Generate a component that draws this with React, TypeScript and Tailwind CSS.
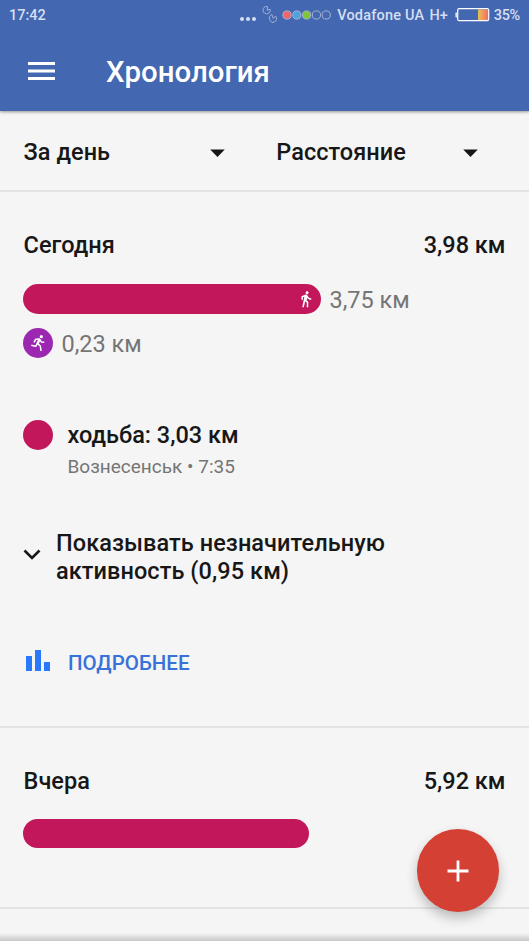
import React from 'react';
import { MdArrowDropDown, MdDirectionsWalk } from 'react-icons/md';

// =====================================================
// Хронология — дневная статистика активности
// =====================================================

const SIM_DOTS = ['fill-[#f0646c]', 'fill-[#4fa3dc]', 'fill-[#7cc63c]', 'fill-none', 'fill-none'];

function StatusBar() {
  return (
    <div className="flex h-[30px] items-center pl-[9px] pr-[9px] text-[14.5px] font-medium leading-none text-[#d5def2]">
      <span className="pt-[2px]">17:42</span>
      <svg className="ml-auto" width="16" height="30" viewBox="0 0 16 30" fill="currentColor">
        <circle cx="2" cy="19" r="2" />
        <circle cx="8" cy="19" r="2" />
        <circle cx="14" cy="19" r="2" />
      </svg>
      <svg className="ml-[6px]" width="16" height="30" viewBox="0 0 16 30" fill="none" stroke="#a3b1d6" strokeWidth="1">
        <path d="M5.400 6.500C2.700 5.900.8 8 1 10.300C1.300 13 3.600 14.300 5.800 13.600C7.700 13 8.700 11.200 8.300 9.400L5.300 10.200Z" />
        <path d="M9.800 14.400C7.600 15.200 6.700 17.700 7.700 19.900L9.900 22.500L12.800 21.800C14.600 20.600 15.100 18 13.800 16.200L11.200 18.300Z" />
      </svg>
      <svg className="ml-[4px]" width="50" height="30" viewBox="0 0 50 30">
        {SIM_DOTS.map((fill, i) => (
          <circle key={i} cx={5 + i * 9.8} cy="15" r="4.1" className={fill} stroke="#a9b3cf" strokeWidth="1" />
        ))}
      </svg>
      <span className="ml-[5px] pt-[2px] tracking-[0.2px]">Vodafone UA</span>
      <span className="ml-[5px] pt-[2px]">H+</span>
      <svg className="ml-[7px]" width="35" height="30" viewBox="0 0 35 30">
        <defs>
          <linearGradient id="charge">
            <stop offset="0" stopColor="#dcc45a" />
            <stop offset="0.35" stopColor="#f3a056" />
            <stop offset="1" stopColor="#f0686c" />
          </linearGradient>
        </defs>
        <path d="M1.800 12.500h-.5a.8.8 0 0 0-.8.8v3.400a.8.8 0 0 0 .8.8h.5Z" fill="white" />
        <rect x="23" y="9.500" width="10.500" height="11" fill="url(#charge)" />
        <rect x="2.700" y="8.700" width="31" height="12" rx="1.500" fill="none" stroke="white" strokeWidth="1.200" />
      </svg>
      <span className="ml-[4px] pt-[2px] tracking-[-0.3px]">35%</span>
    </div>
  );
}

function AppBar() {
  return (
    <div className="flex h-[82px] items-center pl-[28px]">
      <svg width="27" height="20" viewBox="0 0 27 20" fill="white">
        <rect y="1" width="27" height="3" />
        <rect y="8.500" width="27" height="3" />
        <rect y="16" width="27" height="3" />
      </svg>
      <h1 className="ml-[51px] pt-[3px] text-[29.400px] font-medium leading-none text-white">Хронология</h1>
    </div>
  );
}

function RunIcon() {
  return (
    <svg width="16" height="18" viewBox="0 0 48 54" fill="none" stroke="white" strokeWidth="4.500" strokeLinejoin="round">
      <circle cx="34" cy="8" r="4.800" fill="white" stroke="none" />
      <path d="M29 15L22 30" strokeWidth="7.500" />
      <path d="M30 15L17 16L12 25" />
      <path d="M30 17L34 24L43 25" />
      <path d="M23 29L31 36L33 51" />
      <path d="M22 29L17 37L4 34" />
    </svg>
  );
}

function Picker({ label }: { label: string }) {
  return (
    <button type="button" className="flex w-[253px] items-center justify-between pr-[41px] text-left">
      <span className="pt-[2px] tracking-[0.05px]">{label}</span>
      <MdArrowDropDown className="h-[35px] w-[35px]" />
    </button>
  );
}

function DayHeader({ title, total }: { title: string; total: string }) {
  return (
    <div className="flex justify-between pl-[0.5px] leading-[28px]">
      <h2 className="tracking-[0.05px]">{title}</h2>
      <span>{total}</span>
    </div>
  );
}

export default function App() {
  return (
    <div className="relative flex h-[941px] w-[529px] flex-col overflow-hidden bg-[#f5f5f5] font-['Roboto',sans-serif] text-[23.5px] font-medium text-[#171717]">
      <header className="relative h-[111px] shrink-0 bg-[#4367b0] shadow-[0_1px_3px_rgba(0,0,0,0.4)]">
        <StatusBar />
        <AppBar />
      </header>

      {/* Фильтры */}
      <div className="flex h-[81px] shrink-0 items-center border-b-2 border-[#e3e3e3] pl-[23.5px] pt-[3px] leading-none">
        <Picker label="За день" />
        <Picker label="Расстояние" />
      </div>

      {/* Сегодня */}
      <section className="h-[536px] shrink-0 border-b-2 border-[#e3e3e3] pl-[23px] pr-[23.5px] pt-[39px]">
        <DayHeader title="Сегодня" total="3,98 км" />
        <div className="mt-[25px] flex items-center">
          <div className="flex h-[30px] w-[298px] items-center justify-end rounded-full bg-[#c2185b] pr-[6px]">
            <MdDirectionsWalk className="h-[18px] w-[18px] text-white" />
          </div>
          <span className="ml-[8.500px] pt-[2px] font-normal leading-[28px] text-[#757575]">3,75 км</span>
        </div>
        <div className="mt-[14px] flex items-center">
          <div className="flex h-[30px] w-[30px] items-center justify-center rounded-full bg-[#9c27b0]">
            <RunIcon />
          </div>
          <span className="ml-[8.500px] pt-[2px] font-normal leading-[28px] text-[#757575]">0,23 км</span>
        </div>

        <div className="mt-[62px] flex">
          <div className="h-[30px] w-[30px] rounded-full bg-[#c2185b]" />
          <div className="ml-[14.500px]">
            <p className="leading-[30px]">ходьба: 3,03 км</p>
            <p className="mt-[3px] text-[19px] font-normal leading-[28px] text-[#757575]">Вознесенськ • 7:35</p>
          </div>
        </div>

        <button type="button" className="mt-[48px] flex items-center text-left">
          <svg className="mb-[4px]" width="18" height="12" viewBox="0 0 18 12" fill="none" stroke="currentColor" strokeWidth="2.600">
            <path d="M1.500 1.500L9 9L16.500 1.500" />
          </svg>
          <span className="ml-[15px] w-[360px] leading-[28px] tracking-[0.07px]">
            Показывать незначительную активность (0,95 км)
          </span>
        </button>

        <button type="button" className="mt-[62px] flex items-center pl-[3px] leading-[28px] text-[#3871d9]">
          <svg className="mb-[3px]" width="24" height="21" viewBox="0 0 24 21" fill="#2979ff">
            <rect y="6" width="6" height="15" />
            <rect x="9" width="6" height="21" />
            <rect x="18" y="12" width="6" height="9" />
          </svg>
          <span className="ml-[18px] pt-[2px] text-[20.500px]">ПОДРОБНЕЕ</span>
        </button>
      </section>

      {/* Вчера */}
      <section className="h-[181px] shrink-0 border-b-2 border-[#e3e3e3] pl-[23px] pr-[23.5px] pt-[39px]">
        <DayHeader title="Вчера" total="5,92 км" />
        <div className="mt-[24px] h-[29px] w-[286px] rounded-full bg-[#c2185b]" />
      </section>

      <div className="mt-auto h-[8px] bg-linear-to-b from-[#f5f5f5] to-[#c8c8c8]" />

      <button
        type="button"
        aria-label="Добавить"
        className="absolute bottom-[29px] right-[30px] flex h-[83px] w-[82px] items-center justify-center rounded-full bg-[#d44033] shadow-[0_6px_12px_rgba(0,0,0,0.24)]"
      >
        <svg width="22" height="22" viewBox="0 0 22 22" stroke="white" strokeWidth="2.800">
          <path d="M11 .5V21.500M.5 11H21.500" />
        </svg>
      </button>
    </div>
  );
}
